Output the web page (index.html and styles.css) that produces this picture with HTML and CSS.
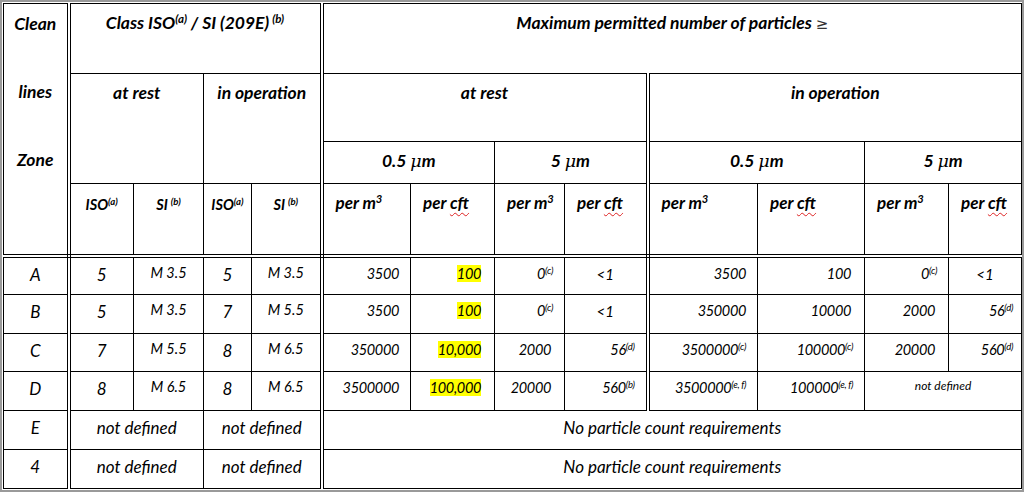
FILE: index.html
```html
<!DOCTYPE html>
<html>
<head>
<meta charset="utf-8">
<link rel="stylesheet" href="styles.css">
</head>
<body>
<div class="frame">
<table class="grid">
  <colgroup>
    <col class="c-zone"><col class="c-iso"><col class="c-si"><col class="c-iso2"><col class="c-si2">
    <col class="c-a1"><col class="c-a2"><col class="c-a3"><col class="c-a4">
    <col class="c-o1"><col class="c-o2"><col class="c-o3"><col class="c-o4">
  </colgroup>
  <thead>
    <tr class="h1">
      <th rowspan="4" class="zone dbl-r dbl-b">
        <div class="zl zl1">Clean</div>
        <div class="zl zl2">lines</div>
        <div class="zl">Zone</div>
      </th>
      <th colspan="4" class="dbl-r">Class ISO<sup>(a)</sup> / SI (209E)<sup class="gap">(b)</sup></th>
      <th colspan="8">Maximum permitted number of particles <span class="ge">≥</span></th>
    </tr>
    <tr class="h2">
      <th colspan="2" rowspan="2">at rest</th>
      <th colspan="2" rowspan="2" class="dbl-r">in operation</th>
      <th colspan="4" class="dbl-r">at rest</th>
      <th colspan="4">in operation</th>
    </tr>
    <tr class="h3">
      <th colspan="2">0.5 <span class="mu">μ</span>m</th>
      <th colspan="2" class="dbl-r">5 <span class="mu">μ</span>m</th>
      <th colspan="2">0.5 <span class="mu">μ</span>m</th>
      <th colspan="2">5 <span class="mu">μ</span>m</th>
    </tr>
    <tr class="h4">
      <th class="sm dbl-b">ISO<sup>(a)</sup></th>
      <th class="sm dbl-b">SI<sup class="gap">(b)</sup></th>
      <th class="sm dbl-b">ISO<sup>(a)</sup></th>
      <th class="sm dbl-b dbl-r">SI<sup class="gap">(b)</sup></th>
      <th class="lft dbl-b">per m<sup>3</sup></th>
      <th class="lft dbl-b">per <span class="spell">cft</span></th>
      <th class="lft dbl-b">per m<sup>3</sup></th>
      <th class="lft dbl-b dbl-r">per <span class="spell">cft</span></th>
      <th class="lft dbl-b">per m<sup>3</sup></th>
      <th class="lft dbl-b">per <span class="spell">cft</span></th>
      <th class="lft dbl-b">per m<sup>3</sup></th>
      <th class="lft dbl-b">per <span class="spell">cft</span></th>
    </tr>
  </thead>
  <tbody>
    <tr class="r1">
      <td class="ctr dbl-r">A</td>
      <td class="ctr">5</td><td class="ctr m">M 3.5</td>
      <td class="ctr">5</td><td class="ctr m dbl-r">M 3.5</td>
      <td class="num">3500</td><td class="num pr13"><span class="hl">100</span></td>
      <td class="num">0<sup>(c)</sup></td><td class="ctr n dbl-r">&lt;1</td>
      <td class="num">3500</td><td class="num pr13">100</td>
      <td class="num">0<sup>(c)</sup></td><td class="ctr n">&lt;1</td>
    </tr>
    <tr class="r2">
      <td class="ctr dbl-r">B</td>
      <td class="ctr">5</td><td class="ctr m">M 3.5</td>
      <td class="ctr">7</td><td class="ctr m dbl-r">M 5.5</td>
      <td class="num">3500</td><td class="num pr13"><span class="hl">100</span></td>
      <td class="num">0<sup>(c)</sup></td><td class="ctr n dbl-r">&lt;1</td>
      <td class="num">350000</td><td class="num pr13">10000</td>
      <td class="num pr13">2000</td><td class="num tight">56<sup>(d)</sup></td>
    </tr>
    <tr class="r3">
      <td class="ctr dbl-r">C</td>
      <td class="ctr">7</td><td class="ctr m">M 5.5</td>
      <td class="ctr">8</td><td class="ctr m dbl-r">M 6.5</td>
      <td class="num">350000</td><td class="num pr13"><span class="hl">10,000</span></td>
      <td class="num pr13">2000</td><td class="num dbl-r">56<sup>(d)</sup></td>
      <td class="num">3500000<sup>(c)</sup></td><td class="num">100000<sup>(c)</sup></td>
      <td class="num pr13">20000</td><td class="num tight">560<sup>(d)</sup></td>
    </tr>
    <tr class="r4">
      <td class="ctr dbl-r">D</td>
      <td class="ctr">8</td><td class="ctr m">M 6.5</td>
      <td class="ctr">8</td><td class="ctr m dbl-r">M 6.5</td>
      <td class="num">3500000</td><td class="num pr13"><span class="hl">100,000</span></td>
      <td class="num pr13">20000</td><td class="num dbl-r">560<sup>(b)</sup></td>
      <td class="num">3500000<sup>(e, f)</sup></td><td class="num">100000<sup>(e, f)</sup></td>
      <td colspan="2" class="ctr nd">not defined</td>
    </tr>
    <tr class="r5">
      <td class="ctr dbl-r">E</td>
      <td colspan="2" class="ctr">not defined</td>
      <td colspan="2" class="ctr dbl-r">not defined</td>
      <td colspan="8" class="ctr">No particle count requirements</td>
    </tr>
    <tr class="r6">
      <td class="ctr dbl-r">4</td>
      <td colspan="2" class="ctr">not defined</td>
      <td colspan="2" class="ctr dbl-r">not defined</td>
      <td colspan="8" class="ctr">No particle count requirements</td>
    </tr>
  </tbody>
</table>
</div>
</body>
</html>
```

FILE: styles.css
```css
html, body {
  margin: 0;
  padding: 0;
  background: #fff;
}

.frame {
  width: 1024px;
  height: 492px;
  box-sizing: border-box;
  border: 2px solid #9a9a9a;
  padding: 1px;
}

.grid {
  width: 1018px;
  table-layout: fixed;
  border-collapse: collapse;
  border: 1px solid #000;
  font-family: "Lato", "Liberation Sans", sans-serif;
  font-style: italic;
  color: #000;
}

.c-zone { width: 65px; }
.c-iso { width: 65px; }
.c-si { width: 70px; }
.c-iso2 { width: 48px; }
.c-si2 { width: 70px; }
.c-a1 { width: 89px; }
.c-a2 { width: 84px; }
.c-a3 { width: 70px; }
.c-a4 { width: 83px; }
.c-o1 { width: 110px; }
.c-o2 { width: 107px; }
.c-o3 { width: 84px; }
.c-o4 { width: 73px; }

.grid th,
.grid td {
  border: 1px solid #000;
  padding: 0;
  vertical-align: top;
  line-height: 20px;
  overflow: hidden;
  white-space: nowrap;
}

.grid th {
  font-weight: 700;
  font-size: 17.5px;
  text-align: center;
  padding-top: 9px;
}

.grid td {
  font-size: 17px;
  font-weight: 400;
  padding-top: 7px;
}

.grid .dbl-r { border-right: 4px double #000; }
.grid .dbl-b { border-bottom: 4px double #000; }

tr.h1 { height: 70px; }
tr.h2 { height: 68px; }
tr.h3 { height: 42px; }
tr.h4 { height: 72px; }
tr.r1 { height: 39px; }
tr.r2 { height: 39px; }
tr.r3 { height: 38px; }
tr.r4 { height: 39px; }
tr.r5 { height: 39px; }
tr.r6 { height: 39px; }

.grid th.zone { padding-top: 10px; }
.zl { height: 20px; }
.zl1 { margin-bottom: 48px; }
.zl2 { margin-bottom: 48px; }

.grid th.sm { font-size: 14.5px; padding-top: 11px; }
.grid th.lft { text-align: left; padding-left: 12px; font-size: 17px; }

.ge { font-weight: 400; font-style: normal; color: #333; font-family: "DejaVu Sans", sans-serif; font-size: 15px; }
.mu { font-family: "DejaVu Serif", serif; font-style: italic; font-weight: 400; }

sup {
  font-size: 0.66em;
  line-height: 0;
  vertical-align: 0.55em;
}
sup.gap { margin-left: 3px; }

.spell {
  text-decoration: underline wavy #d22;
  text-decoration-thickness: 1px;
  text-underline-offset: 3px;
}

.grid td.ctr { text-align: center; }
.grid td.num {
  text-align: right;
  padding-right: 11px;
  font-size: 14.5px;
  letter-spacing: -0.35px;
  padding-top: 6px;
}
.grid td.pr13 { padding-right: 13px; }
.grid td.tight { padding-right: 8px; }
.grid td.n { font-size: 15px; padding-top: 6px; }
.grid td.m { font-size: 14.5px; padding-top: 5px; }
.grid td.nd { font-size: 12px; padding-top: 4px; }

.hl { background: #ffff00; }
```
